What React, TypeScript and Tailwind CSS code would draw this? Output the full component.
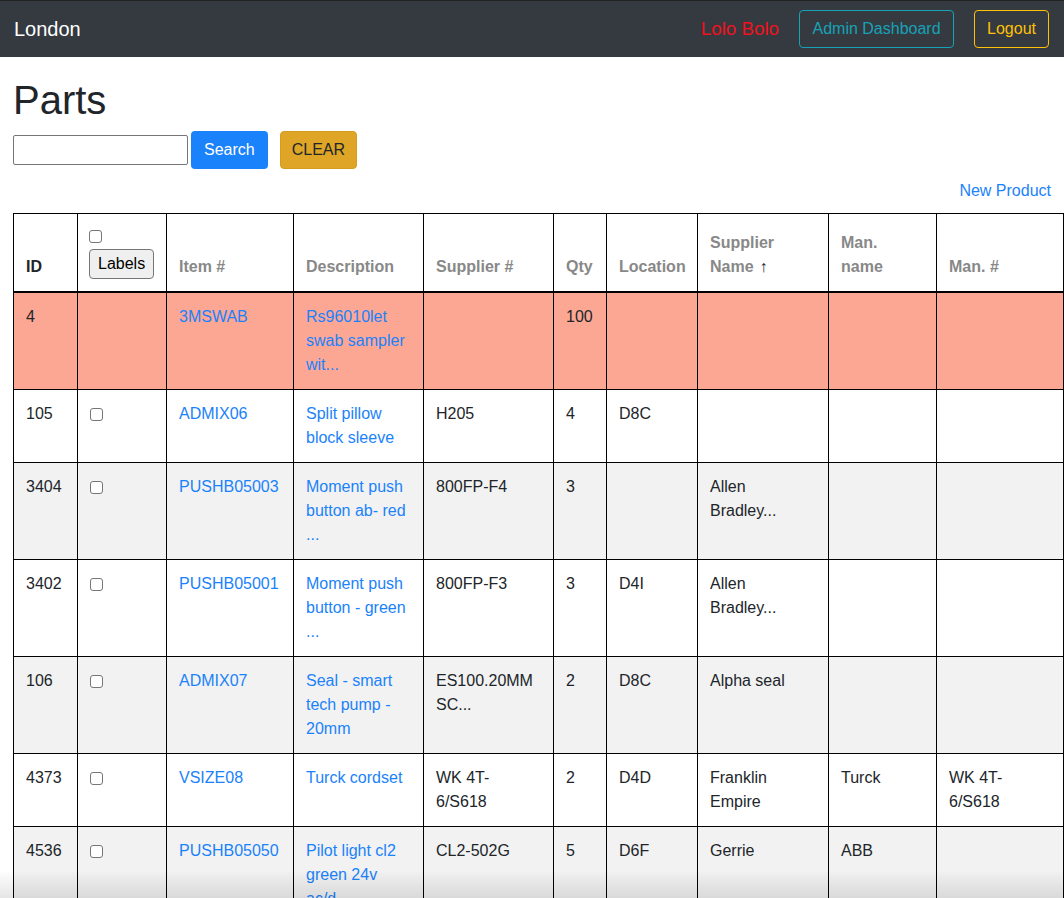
import React from "react";

type Row = {
  id: string;
  check: boolean;
  item: string;
  desc: string;
  supplier: string;
  qty: string;
  location: string;
  supplierName: string;
  manName: string;
  manNo: string;
  tone: "hot" | "white" | "gray";
};

const rows: Row[] = [
  { id: "4", check: false, item: "3MSWAB", desc: "Rs96010let\nswab sampler\nwit...", supplier: "", qty: "100", location: "", supplierName: "", manName: "", manNo: "", tone: "hot" },
  { id: "105", check: true, item: "ADMIX06", desc: "Split pillow\nblock sleeve", supplier: "H205", qty: "4", location: "D8C", supplierName: "", manName: "", manNo: "", tone: "white" },
  { id: "3404", check: true, item: "PUSHB05003", desc: "Moment push\nbutton ab- red\n...", supplier: "800FP-F4", qty: "3", location: "", supplierName: "Allen\nBradley...", manName: "", manNo: "", tone: "gray" },
  { id: "3402", check: true, item: "PUSHB05001", desc: "Moment push\nbutton - green\n...", supplier: "800FP-F3", qty: "3", location: "D4I", supplierName: "Allen\nBradley...", manName: "", manNo: "", tone: "white" },
  { id: "106", check: true, item: "ADMIX07", desc: "Seal - smart\ntech pump -\n20mm", supplier: "ES100.20MM\nSC...", qty: "2", location: "D8C", supplierName: "Alpha seal", manName: "", manNo: "", tone: "gray" },
  { id: "4373", check: true, item: "VSIZE08", desc: "Turck cordset", supplier: "WK 4T-\n6/S618", qty: "2", location: "D4D", supplierName: "Franklin\nEmpire", manName: "Turck", manNo: "WK 4T-\n6/S618", tone: "white" },
  { id: "4536", check: true, item: "PUSHB05050", desc: "Pilot light cl2\ngreen 24v\nac/d...", supplier: "CL2-502G", qty: "5", location: "D6F", supplierName: "Gerrie", manName: "ABB", manNo: "", tone: "gray" },
];

const toneClass = {
  hot: "bg-[#fca794]",
  white: "bg-white",
  gray: "bg-[#f2f2f2]",
};

function Checkbox() {
  return (
    <input
      type="checkbox"
      className="appearance-none block w-[13px] h-[13px] border border-[#767676] rounded-[3px] bg-white"
    />
  );
}

const td = "border border-black px-3 py-3 align-top whitespace-pre leading-6";
const thBase = "border border-black border-b-2 px-3 py-3 align-bottom whitespace-pre leading-6 font-bold";
const th = thBase + " text-[#888888]";

function App() {
  return (
    <div className="min-h-screen bg-white text-[#212529] text-base font-['Liberation_Sans',Arial,sans-serif]">
      <nav className="h-[57px] bg-[#343a40] border-t border-[#222] flex items-center justify-between pl-[14px] pr-[15px]">
        <span className="text-white text-[20px]">London</span>
        <div className="flex items-center gap-5">
          <span className="text-[#f2111d] text-[18.75px]">Lolo Bolo</span>
          <button className="h-[38px] px-[12.5px] border border-[#17a2b8] rounded text-[#17a2b8]">Admin Dashboard</button>
          <button className="h-[38px] px-3 border border-[#ffc107] rounded text-[#ffc107]">Logout</button>
        </div>
      </nav>

      <div className="px-[13px]">
        <h1 className="mt-[19px] text-[40px] leading-[48px] font-medium">Parts</h1>
        <div className="mt-[7px] flex items-center">
          <input type="text" className="w-[175px] h-[30px] border border-[#767676] rounded-[2px]" />
          <button className="ml-[3px] h-[38px] px-[13px] rounded bg-[#1a82fb] text-white">Search</button>
          <button className="ml-3 h-[38px] px-[11px] rounded bg-[#dea526] border border-[#d49d20] text-[#212529]">CLEAR</button>
        </div>
        <div className="mt-[10px] flex justify-end leading-6">
          <a className="text-[#1a82fb] cursor-pointer">New Product</a>
        </div>

        <table className="mt-[10px] w-[1051px] table-fixed border-collapse text-left">
          <colgroup>
            <col className="w-[64px]" />
            <col className="w-[89px]" />
            <col className="w-[127px]" />
            <col className="w-[130px]" />
            <col className="w-[130px]" />
            <col className="w-[53px]" />
            <col className="w-[91px]" />
            <col className="w-[131px]" />
            <col className="w-[108px]" />
            <col className="w-[127px]" />
          </colgroup>
          <thead>
            <tr className="bg-white">
              <th className={thBase + " text-[#212529]"}>ID</th>
              <th className="border border-black border-b-2 pl-[11px] pr-2 py-3 align-top">
                <div className="flex flex-col items-start">
                  <span className="mt-[4px]"><Checkbox /></span>
                  <button className="mt-[6px] h-[30px] px-2 bg-[#efefef] border border-[#767676] rounded-[4px] text-base font-normal text-black">Labels</button>
                </div>
              </th>
              <th className={th}>Item #</th>
              <th className={th}>Description</th>
              <th className={th}>Supplier #</th>
              <th className={th}>Qty</th>
              <th className={th}>Location</th>
              <th className={th}>
                <div>Supplier</div>
                <div className="flex items-center gap-[6px]">
                  <span>Name</span>
                  <span className="text-[#212529]">↑</span>
                </div>
              </th>
              <th className={th}>{"Man.\nname"}</th>
              <th className={th}>Man. #</th>
            </tr>
          </thead>
          <tbody>
            {rows.map((r) => (
              <tr key={r.id} className={toneClass[r.tone]}>
                <td className={td}>{r.id}</td>
                <td className={td}>
                  {r.check ? <span className="block mt-[6px]"><Checkbox /></span> : null}
                </td>
                <td className={td + " text-[#1a82fb]"}>{r.item}</td>
                <td className={td + " text-[#1a82fb]"}>{r.desc}</td>
                <td className={td}>{r.supplier}</td>
                <td className={td}>{r.qty}</td>
                <td className={td}>{r.location}</td>
                <td className={td}>{r.supplierName}</td>
                <td className={td}>{r.manName}</td>
                <td className={td}>{r.manNo}</td>
              </tr>
            ))}
          </tbody>
        </table>
      </div>

      <div className="fixed left-0 right-0 bottom-0 h-[28px] pointer-events-none bg-gradient-to-t from-black/10 to-transparent" />
    </div>
  );
}

export default App;
